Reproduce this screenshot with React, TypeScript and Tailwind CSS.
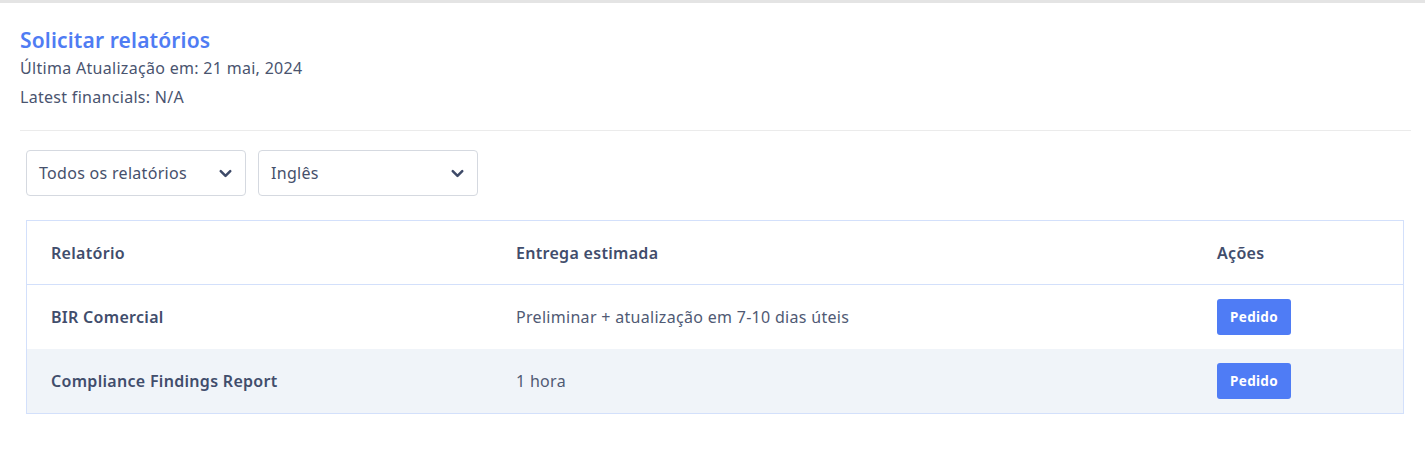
import { ChevronDown } from "lucide-react";

const rows = [
  { name: "BIR Comercial", eta: "Preliminar + atualização em 7-10 dias úteis" },
  { name: "Compliance Findings Report", eta: "1 hora" },
];

function Select({ label }: { label: string }) {
  return (
    <div className="flex h-[46px] w-[220px] items-center justify-between rounded border border-[#d5d9e0] bg-white pl-[12px] pr-[10px] text-[16px] tracking-[0.3px] text-[#46506b]">
      <span>{label}</span>
      <ChevronDown className="h-[19px] w-[19px] text-[#3e4a68]" strokeWidth={3.2} />
    </div>
  );
}

export default function App() {
  return (
    <div className="min-h-[458px] bg-white font-['Noto_Sans',sans-serif]">
      <div className="h-[3px] w-full bg-[#e4e4e4]" />

      <div className="pl-[20px] pr-[14px] pt-[23px]">
        <h1 className="text-[21px] font-semibold leading-[28px] tracking-[0.15px] text-[#4f7cf3]">
          Solicitar relatórios
        </h1>
        <p className="mt-[1px] text-[16px] leading-[26px] tracking-[0.3px] text-[#4a546f]">
          Última Atualização em: 21 mai, 2024
        </p>
        <p className="mt-[3px] text-[16px] leading-[26px] tracking-[0.3px] text-[#4a546f]">Latest financials: N/A</p>

        <div className="mt-[20px] h-px bg-[#ebebeb]" />

        <div className="pl-[6px] pr-[7px] pt-[19px]">
          <div className="flex gap-[12px]">
            <Select label="Todos os relatórios" />
            <Select label="Inglês" />
          </div>

          <div className="mt-[24px] border border-[#d3e0fb] text-[16px] tracking-[0.3px]">
            <div className="grid h-[64px] grid-cols-[465px_701px_1fr] items-center border-b border-[#d3e0fb] px-[24px] font-semibold text-[#414d6c]">
              <span>Relatório</span>
              <span>Entrega estimada</span>
              <span>Ações</span>
            </div>
            {rows.map((row, i) => (
              <div
                key={row.name}
                className={`grid h-[64px] grid-cols-[465px_701px_1fr] items-center px-[24px] ${i % 2 === 1 ? "bg-[#f0f4f9]" : "bg-white"}`}
              >
                <span className="font-semibold text-[#414d6c]">{row.name}</span>
                <span className="text-[#505a74]">{row.eta}</span>
                <span>
                  <button className="h-[36px] w-[74px] rounded-[3px] bg-[#4f7cf5] text-[13.5px] font-bold tracking-[0.3px] text-white">
                    Pedido
                  </button>
                </span>
              </div>
            ))}
          </div>
        </div>
      </div>
    </div>
  );
}
